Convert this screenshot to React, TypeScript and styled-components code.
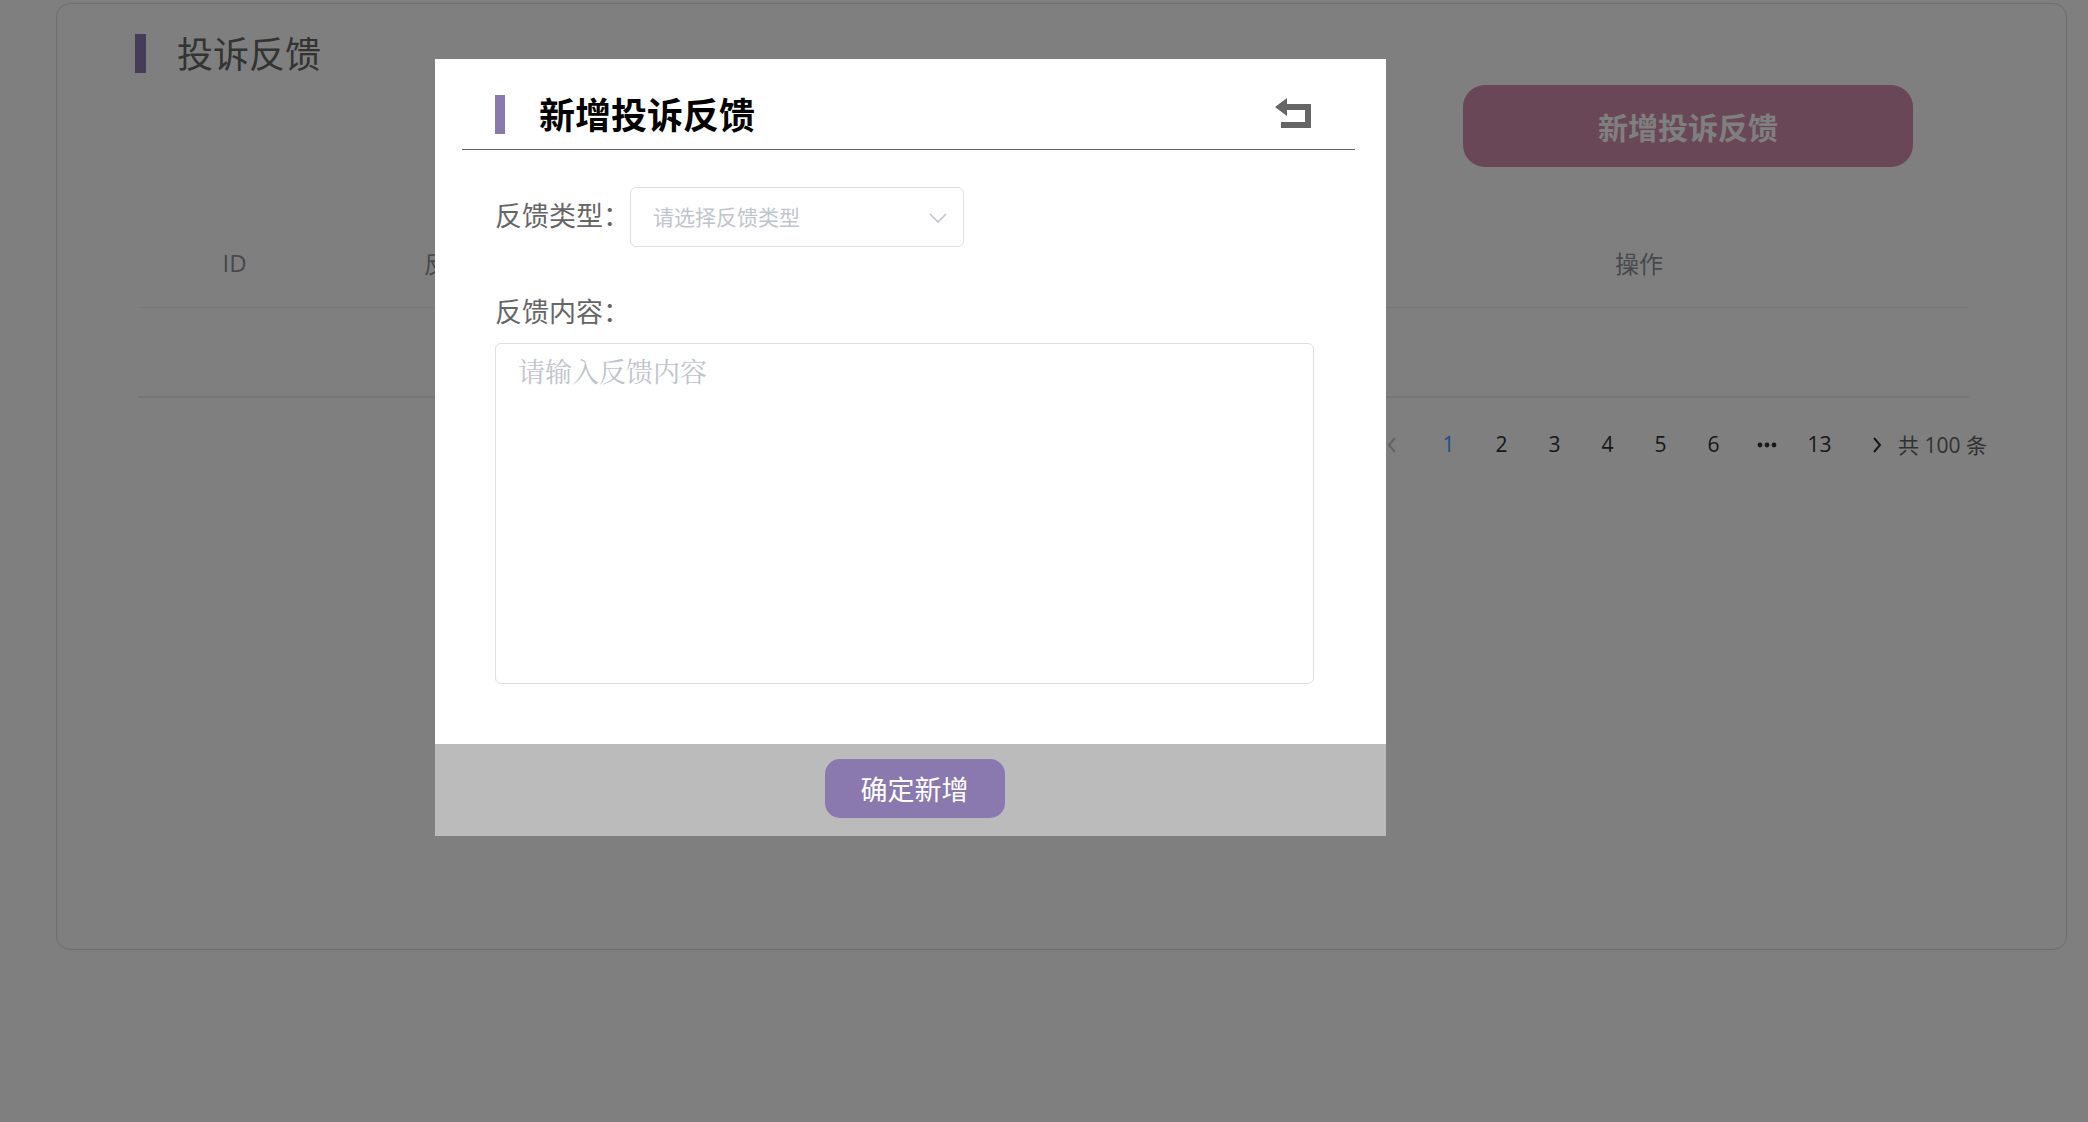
import React from 'react';
import styled, { createGlobalStyle } from 'styled-components';

const sans = '"Open Sans", "Noto Sans CJK SC", sans-serif';
const cjk = '"Noto Sans CJK SC", sans-serif';

const GlobalStyle = createGlobalStyle`
  *, *::before, *::after { box-sizing: border-box; }
  body { margin: 0; background: #fff; font-family: ${cjk}; color: #666; }
  button, select, textarea { font-family: inherit; }
  button { border: 0; padding: 0; cursor: pointer; }
`;

const Card = styled.main`
  margin: 3px 21px 0 56px;
  min-height: calc(100vh - 175px);
  border: 1px solid #dcdcdc;
  border-radius: 14px;
  padding-top: 30px;
`;

const Heading = styled.header<{ $gap: number }>`
  display: flex;
  align-items: flex-start;
  gap: ${(p) => p.$gap}px;
`;

const PageHeading = styled(Heading)`
  padding-left: 78px;
`;

const Marker = styled.span<{ $width: number }>`
  width: ${(p) => p.$width}px;
  height: 39px;
  background: #8a79af;
`;

const PageTitle = styled.h1`
  margin: 0;
  font-size: 36px;
  line-height: 36px;
  font-weight: 400;
`;

const Toolbar = styled.div`
  display: flex;
  justify-content: flex-end;
  padding: 12px 153px 53px 0;
`;

const AddButton = styled.button`
  width: 450px;
  height: 82px;
  border-radius: 22px;
  background: #d48fac;
  color: #fff;
  font-size: 30px;
  font-weight: 700;
`;

const TableWrap = styled.div`
  padding: 0 97px 0 81px;
`;

const Table = styled.table`
  width: 100%;
  table-layout: fixed;
  border-collapse: separate;
  border-spacing: 0;
  border-bottom: 1px solid #ebeef5;
`;

const HeadCell = styled.th<{ $share: string }>`
  width: ${(p) => p.$share};
  height: 88px;
  padding: 0 1px 3px 0;
  border-bottom: 1px solid #ebeef5;
  color: #909399;
  font-family: ${sans};
  font-size: 24px;
  font-weight: 400;
  text-align: center;
`;

const EmptyCell = styled.td`
  height: 89px;
  padding: 0;
  border-bottom: 1px solid #ebeef5;
`;

const Pagination = styled.nav`
  display: flex;
  justify-content: flex-end;
  align-items: center;
  padding: 26px 79px 0 0;
  font-family: ${sans};
  font-size: 21px;
  line-height: 42px;
`;

const PageButton = styled.button<{ $active?: boolean }>`
  width: 53px;
  height: 42px;
  padding-bottom: 2px;
  background: none;
  color: ${(p) => (p.$active ? '#409eff' : '#303133')};
  font-size: 21px;
`;

const MoreButton = styled(PageButton)`
  display: grid;
  place-items: center;
  padding: 0;
`;

const StepButton = styled.button<{ $side: 'left' | 'right' }>`
  display: grid;
  place-items: center;
  width: 43px;
  height: 42px;
  margin-${(p) => p.$side}: 9px;
  background: none;
  color: #303133;
  &:disabled { color: #c0c4cc; cursor: default; }
`;

const Total = styled.span`
  color: #606266;
`;

const Overlay = styled.div`
  position: fixed;
  inset: 0;
  display: grid;
  grid-template-columns: 435fr 951fr 702fr;
  align-items: start;
  padding-top: 59px;
  background: rgba(0, 0, 0, 0.5);
`;

const Dialog = styled.section`
  grid-column: 2;
  background: #fff;
`;

const DialogHeading = styled(Heading)`
  margin: 0 31px 0 27px;
  padding: 36px 44px 15px 33px;
  border-bottom: 1px solid #666;
`;

const DialogTitle = styled.h2`
  flex: 1;
  margin: 0;
  color: #000;
  font-size: 36px;
  line-height: 36px;
  font-weight: 700;
`;

const BackButton = styled.button`
  display: block;
  height: 36px;
  background: none;
  color: #666;
  svg { display: block; }
`;

const Fields = styled.div`
  padding: 37px 72px 60px 60px;
`;

const Row = styled.div`
  display: flex;
  align-items: center;
`;

const Label = styled.label`
  display: block;
  font-size: 27px;
  line-height: 40px;
`;

const InlineLabel = styled(Label)`
  padding-bottom: 5px;
`;

const SelectBox = styled.div`
  position: relative;
  width: 334px;
  svg {
    position: absolute;
    right: 17px;
    top: 26px;
    color: #c0c4cc;
    pointer-events: none;
  }
`;

const Select = styled.select`
  appearance: none;
  width: 100%;
  height: 60px;
  padding: 0 50px 3px 22px;
  border: 1px solid #dcdfe6;
  border-radius: 6px;
  background: #fff;
  color: #c0c4cc;
  font-size: 21px;
`;

const ContentField = styled.div`
  display: grid;
  gap: 12px;
  padding-top: 44px;
`;

const TextArea = styled.textarea`
  display: block;
  width: 100%;
  height: 341px;
  padding: 7px 22px;
  border: 1px solid #dcdfe6;
  border-radius: 6px;
  resize: none;
  font-family: "Noto Serif CJK SC", "Noto Sans CJK SC", serif;
  font-size: 27px;
  line-height: 40px;
  &::placeholder { color: #c0c4cc; opacity: 1; }
`;

const DialogFooter = styled.footer`
  display: flex;
  justify-content: center;
  padding: 15px 0 18px 8px;
  background: #bbb;
`;

const SubmitButton = styled.button`
  width: 180px;
  height: 59px;
  border-radius: 15px;
  background: #8a79af;
  color: #fff;
  font-size: 27px;
`;

const Chevron = ({ points }: { points: string }) => (
  <svg width="10" height="16" viewBox="0 0 10 16" fill="none" stroke="currentColor" strokeWidth="2" aria-hidden="true">
    <polyline points={points} />
  </svg>
);

const pages = [1, 2, 3, 4, 5, 6];

export default function App() {
  return (
    <>
      <GlobalStyle />
      <Card>
        <PageHeading $gap={31}>
          <Marker $width={11} />
          <PageTitle>投诉反馈</PageTitle>
        </PageHeading>
        <Toolbar>
          <AddButton type="button">新增投诉反馈</AddButton>
        </Toolbar>
        <TableWrap>
          <Table>
            <thead>
              <tr>
                <HeadCell $share="10.6%">ID</HeadCell>
                <HeadCell $share="15.3%">反馈类型</HeadCell>
                <HeadCell $share="38.1%" />
                <HeadCell $share="36%">操作</HeadCell>
              </tr>
            </thead>
            <tbody>
              <tr>
                <EmptyCell colSpan={4} />
              </tr>
            </tbody>
          </Table>
        </TableWrap>
        <Pagination aria-label="pagination">
          <StepButton type="button" $side="right" disabled aria-label="previous">
            <Chevron points="8,1 2,8 8,15" />
          </StepButton>
          {pages.map((n) => (
            <PageButton key={n} type="button" $active={n === 1}>
              {n}
            </PageButton>
          ))}
          <MoreButton type="button" aria-label="more">
            <svg width="20" height="6" viewBox="0 0 20 6" fill="currentColor" aria-hidden="true">
              <circle cx="3" cy="3" r="2.4" />
              <circle cx="10" cy="3" r="2.4" />
              <circle cx="17" cy="3" r="2.4" />
            </svg>
          </MoreButton>
          <PageButton type="button">13</PageButton>
          <StepButton type="button" $side="left" aria-label="next">
            <Chevron points="2,1 8,8 2,15" />
          </StepButton>
          <Total>共 100 条</Total>
        </Pagination>
      </Card>

      <Overlay>
        <Dialog role="dialog" aria-labelledby="dialog-title">
          <DialogHeading $gap={34}>
            <Marker $width={10} />
            <DialogTitle id="dialog-title">新增投诉反馈</DialogTitle>
            <BackButton type="button" aria-label="back">
              <svg width="36" height="30" viewBox="0 0 36 30" fill="currentColor" aria-hidden="true">
                <path d="M0 9 12 0V6H36V30H6V24H30V12H12V18Z" />
              </svg>
            </BackButton>
          </DialogHeading>
          <form>
            <Fields>
              <Row>
                <InlineLabel htmlFor="type">反馈类型：</InlineLabel>
                <SelectBox>
                  <Select id="type" defaultValue="">
                    <option value="">请选择反馈类型</option>
                  </Select>
                  <svg width="18" height="10" viewBox="0 0 18 10" fill="none" stroke="currentColor" strokeWidth="1.6" aria-hidden="true">
                    <polyline points="1,1 9,9 17,1" />
                  </svg>
                </SelectBox>
              </Row>
              <ContentField>
                <Label htmlFor="content">反馈内容：</Label>
                <TextArea id="content" placeholder="请输入反馈内容" />
              </ContentField>
            </Fields>
            <DialogFooter>
              <SubmitButton type="button">确定新增</SubmitButton>
            </DialogFooter>
          </form>
        </Dialog>
      </Overlay>
    </>
  );
}
